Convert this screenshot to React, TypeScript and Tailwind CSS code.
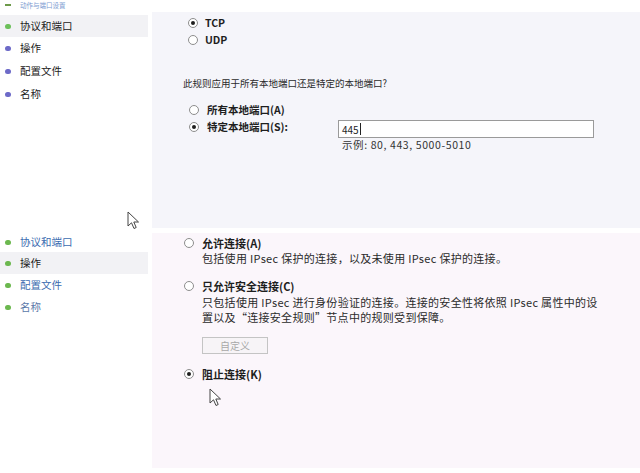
import React from 'react';

const font = { fontFamily: '"Noto Sans CJK SC", "Liberation Sans", sans-serif' };

const Radio: React.FC<{ checked?: boolean }> = ({ checked }) => (
  <span className="flex h-[10px] w-[10px] shrink-0 items-center justify-center rounded-full border border-[#8d8d8d] bg-white">
    {checked && <span className="h-[4px] w-[4px] rounded-full bg-[#1e1e1e]" />}
  </span>
);

const Cursor: React.FC<{ className: string }> = ({ className }) => (
  <svg className={className} width="13" height="19" viewBox="0 0 13 19">
    <path d="M1 1 L1 15 L4.5 11.8 L7 17.5 L9.2 16.5 L6.8 11 L11.5 11 Z" fill="#fff" stroke="#444" strokeWidth="1" strokeLinejoin="round" />
  </svg>
);

type NavItem = { label: string; dot: string; text: string; active?: boolean };

const topNav: NavItem[] = [
  { label: '协议和端口', dot: 'bg-[#6cc05a]', text: 'text-[#222]', active: true },
  { label: '操作', dot: 'bg-[#6d6ac8]', text: 'text-[#222]' },
  { label: '配置文件', dot: 'bg-[#6d6ac8]', text: 'text-[#222]' },
  { label: '名称', dot: 'bg-[#6d6ac8]', text: 'text-[#222]' },
];

const bottomNav: NavItem[] = [
  { label: '协议和端口', dot: 'bg-[#6cb84f]', text: 'text-[#3b6cb0]' },
  { label: '操作', dot: 'bg-[#6cb84f]', text: 'text-[#1a1a1a]', active: true },
  { label: '配置文件', dot: 'bg-[#6cb84f]', text: 'text-[#3b6cb0]' },
  { label: '名称', dot: 'bg-[#6cb84f]', text: 'text-[#5a78a8]' },
];

const NavRow: React.FC<{ item: NavItem; h: string }> = ({ item, h }) => (
  <div className={`flex items-center gap-[9px] pl-[5px] ${h} ${item.active ? 'bg-[#f2f2f5]' : ''}`}>
    <span className={`h-[5px] w-[6px] rounded-full ${item.dot}`} />
    <span className={`text-[10.5px] leading-none ${item.text}`}>{item.label}</span>
  </div>
);

export default function App() {
  return (
    <div className="relative h-[473px] w-[640px] overflow-hidden bg-white text-[#1e1e1e]" style={font}>
      {/* top capture */}
      <div className="flex h-[228px]">
        <div className="w-[152px] shrink-0 pr-[4px]">
          <div className="flex h-[15px] items-start gap-[9px] pl-[5px] pt-[1px]">
            <span className="mt-[3px] h-[2px] w-[6px] bg-[#6d9a4a]" />
            <span className="text-[6.5px] leading-[9px] text-[#7a9ad0]">动作与端口设置</span>
          </div>
          <NavRow item={topNav[0]} h="h-[22px]" />
          {topNav.slice(1).map((n) => (
            <NavRow key={n.label} item={n} h="h-[23px]" />
          ))}
        </div>
        <div className="mt-[12px] flex-1 bg-[#f5f5fa] pl-[36px] pt-[2px]">
          <div className="flex h-[17px] items-center gap-[7px]">
            <Radio checked />
            <span className="text-[10.5px] font-bold">TCP</span>
          </div>
          <div className="flex h-[17px] items-center gap-[7px]">
            <Radio />
            <span className="text-[10.5px] font-bold">UDP</span>
          </div>
          <div className="-ml-[5px] mt-[30px] flex h-[12px] items-center text-[9.5px] leading-none text-[#2a2a2a]">
            此规则应用于所有本地端口还是特定的本地端口?
          </div>
          <div className="ml-[1px] mt-[11px] flex h-[17px] items-center gap-[8px]">
            <Radio />
            <span className="text-[10.5px] font-bold">所有本地端口(A)</span>
          </div>
          <div className="ml-[1px] flex">
            <div className="flex h-[17px] w-[149px] items-center gap-[8px]">
              <Radio checked />
              <span className="text-[10.5px] font-bold">特定本地端口(S):</span>
            </div>
            <div className="mt-[2px]">
              <div className="flex h-[18px] w-[256px] items-center border border-[#9a9a9a] bg-white pl-[3px] text-[10px]">
                445<span className="ml-px h-[12px] w-px bg-[#222]" />
              </div>
              <div className="mt-[1px] pl-[4px] text-[10.5px] leading-[12px] tracking-[0.6px] text-[#333]">示例: 80, 443, 5000-5010</div>
            </div>
          </div>
        </div>
      </div>

      {/* bottom capture */}
      <div className="mt-[5px] flex h-[235px]">
        <div className="w-[152px] shrink-0 pr-[4px]">
          <NavRow item={bottomNav[0]} h="h-[19px]" />
          {bottomNav.slice(1).map((n) => (
            <NavRow key={n.label} item={n} h="h-[22px]" />
          ))}
        </div>
        <div className="flex-1 bg-[#fbf6fb] pl-[32px] pt-[2px]">
          <div className="flex h-[16px] items-center gap-[8px]">
            <Radio />
            <span className="text-[11px] font-bold">允许连接(A)</span>
          </div>
          <div className="ml-[18px] mt-[1px] h-[12px] text-[11px] leading-[12px] tracking-[0.3px] text-[#2a2a2a]">
            包括使用 IPsec 保护的连接，以及未使用 IPsec 保护的连接。
          </div>
          <div className="mt-[14px] flex h-[16px] items-center gap-[8px]">
            <Radio />
            <span className="text-[11px] font-bold">只允许安全连接(C)</span>
          </div>
          <div className="ml-[18px] mt-[1px] text-[11px] leading-[15px] tracking-[0.3px] text-[#2a2a2a]">
            <div>只包括使用 IPsec 进行身份验证的连接。连接的安全性将依照 IPsec 属性中的设</div>
            <div>置以及“连接安全规则”节点中的规则受到保障。</div>
          </div>
          <div className="ml-[18px] mt-[12px] flex h-[17px] w-[66px] items-center justify-center border border-[#c4c4c4] bg-[#f7f4f7] text-[10px] text-[#a8a8a8]">
            自定义
          </div>
          <div className="mt-[12px] flex h-[16px] items-center gap-[8px]">
            <Radio checked />
            <span className="text-[11px] font-bold">阻止连接(K)</span>
          </div>
        </div>
      </div>

      <Cursor className="absolute left-[127px] top-[211px]" />
      <Cursor className="absolute left-[209px] top-[388px]" />
    </div>
  );
}
